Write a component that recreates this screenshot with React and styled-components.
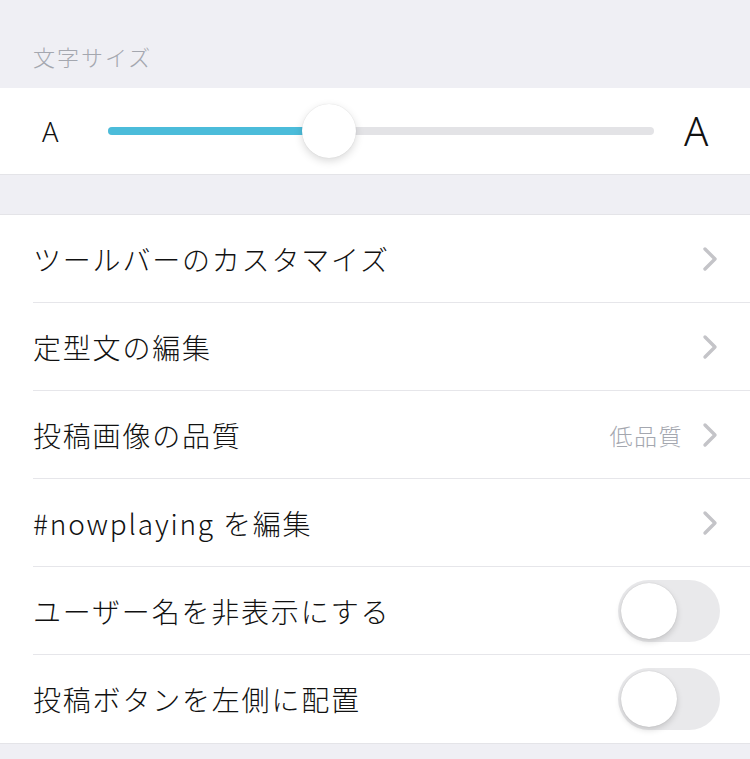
import React from 'react'
import styled, { createGlobalStyle } from 'styled-components'

const GlobalStyle = createGlobalStyle`
  html, body {
    margin: 0;
    padding: 0;
    background: #efeff4;
    font-family: "Noto Sans CJK JP", "Noto Sans", sans-serif;
    -webkit-font-smoothing: antialiased;
  }
`

const Page = styled.div`
  width: 750px;
  height: 759px;
  background: #efeff4;
  overflow: hidden;
`

const SectionHeader = styled.div`
  height: 88px;
  box-sizing: border-box;
  padding: 40px 0 0 33px;
  font-size: 22px;
  font-weight: 300;
  letter-spacing: 2px;
  line-height: 32px;
  color: #a4a7af;
`

const Card = styled.div`
  background: #fff;
  border-top: ${(p) => (p.top ? '1px solid #e4e4e8' : 'none')};
  border-bottom: 1px solid #e4e4e8;
  margin-bottom: ${(p) => p.gap || 0}px;
`

const SliderRow = styled.div`
  height: 86px;
  display: flex;
  align-items: center;
  padding: 0 38px 0 42px;
`

const Letter = styled.span`
  font-family: "Noto Sans", sans-serif;
  font-size: ${(p) => p.size}px;
  font-weight: 300;
  color: #111;
  line-height: 1;
  width: ${(p) => p.w}px;
`

const Track = styled.div`
  position: relative;
  flex: 1;
  height: 8px;
  margin: 0 30px 0 ${(p) => p.ml}px;
  border-radius: 4px;
  background: #e3e3e6;
`

const Fill = styled.div`
  height: 100%;
  border-radius: 4px;
  background: #4bbcda;
`

const Thumb = styled.div`
  position: absolute;
  top: 50%;
  width: 54px;
  height: 54px;
  border-radius: 50%;
  background: #fff;
  transform: translate(-50%, -50%);
  box-shadow: 0 3px 8px rgba(0, 0, 0, 0.15), 0 0 1px rgba(0, 0, 0, 0.15);
`

const Row = styled.div`
  height: 88px;
  display: flex;
  align-items: center;
  margin-left: 33px;
  padding-right: 32px;
  box-sizing: border-box;
  border-bottom: ${(p) => (p.last ? 'none' : '1px solid #e6e6ea')};
`

const Label = styled.div`
  flex: 1;
  font-size: 28px;
  font-weight: 300;
  color: #111;
  letter-spacing: 1.8px;
`

const Value = styled.span`
  font-size: 23px;
  font-weight: 300;
  letter-spacing: 1.5px;
  color: #a4a7af;
  margin-right: 19px;
`

const Switch = styled.div`
  position: relative;
  width: 102px;
  height: 62px;
  margin-right: -2px;
  border-radius: 31px;
  background: #e9e9eb;
`

const Knob = styled.div`
  position: absolute;
  left: 3px;
  top: 3px;
  width: 56px;
  height: 56px;
  border-radius: 50%;
  background: #fff;
  box-shadow: 0 3px 6px rgba(0, 0, 0, 0.15), 0 0 1px rgba(0, 0, 0, 0.2);
`

const Chevron = () => (
  <svg width="16" height="26" viewBox="0 0 16 26">
    <path d="M3 3 L13 13 L3 23" fill="none" stroke="#c4c4c8" strokeWidth="3.4" strokeLinecap="round" strokeLinejoin="round" />
  </svg>
)

const rows = [
  { label: 'ツールバーのカスタマイズ', type: 'link' },
  { label: '定型文の編集', type: 'link' },
  { label: '投稿画像の品質', type: 'link', value: '低品質' },
  { label: '#nowplaying を編集', type: 'link' },
  { label: 'ユーザー名を非表示にする', type: 'switch' },
  { label: '投稿ボタンを左側に配置', type: 'switch' },
]

const App = () => {
  const level = 0.405
  return (
    <Page>
      <GlobalStyle />
      <SectionHeader>文字サイズ</SectionHeader>
      <Card gap={39}>
        <SliderRow>
          <Letter size={27} w={20}>A</Letter>
          <Track ml={46}>
            <Fill style={{ width: `${level * 100}%` }} />
            <Thumb style={{ left: `${level * 100}%` }} />
          </Track>
          <Letter size={40} w={28}>A</Letter>
        </SliderRow>
      </Card>
      <Card top>
        {rows.map((r, i) => (
          <Row key={r.label} last={i === rows.length - 1}>
            <Label>{r.label}</Label>
            {r.value && <Value>{r.value}</Value>}
            {r.type === 'link' ? (
              <Chevron />
            ) : (
              <Switch>
                <Knob />
              </Switch>
            )}
          </Row>
        ))}
      </Card>
    </Page>
  )
}

export default App
